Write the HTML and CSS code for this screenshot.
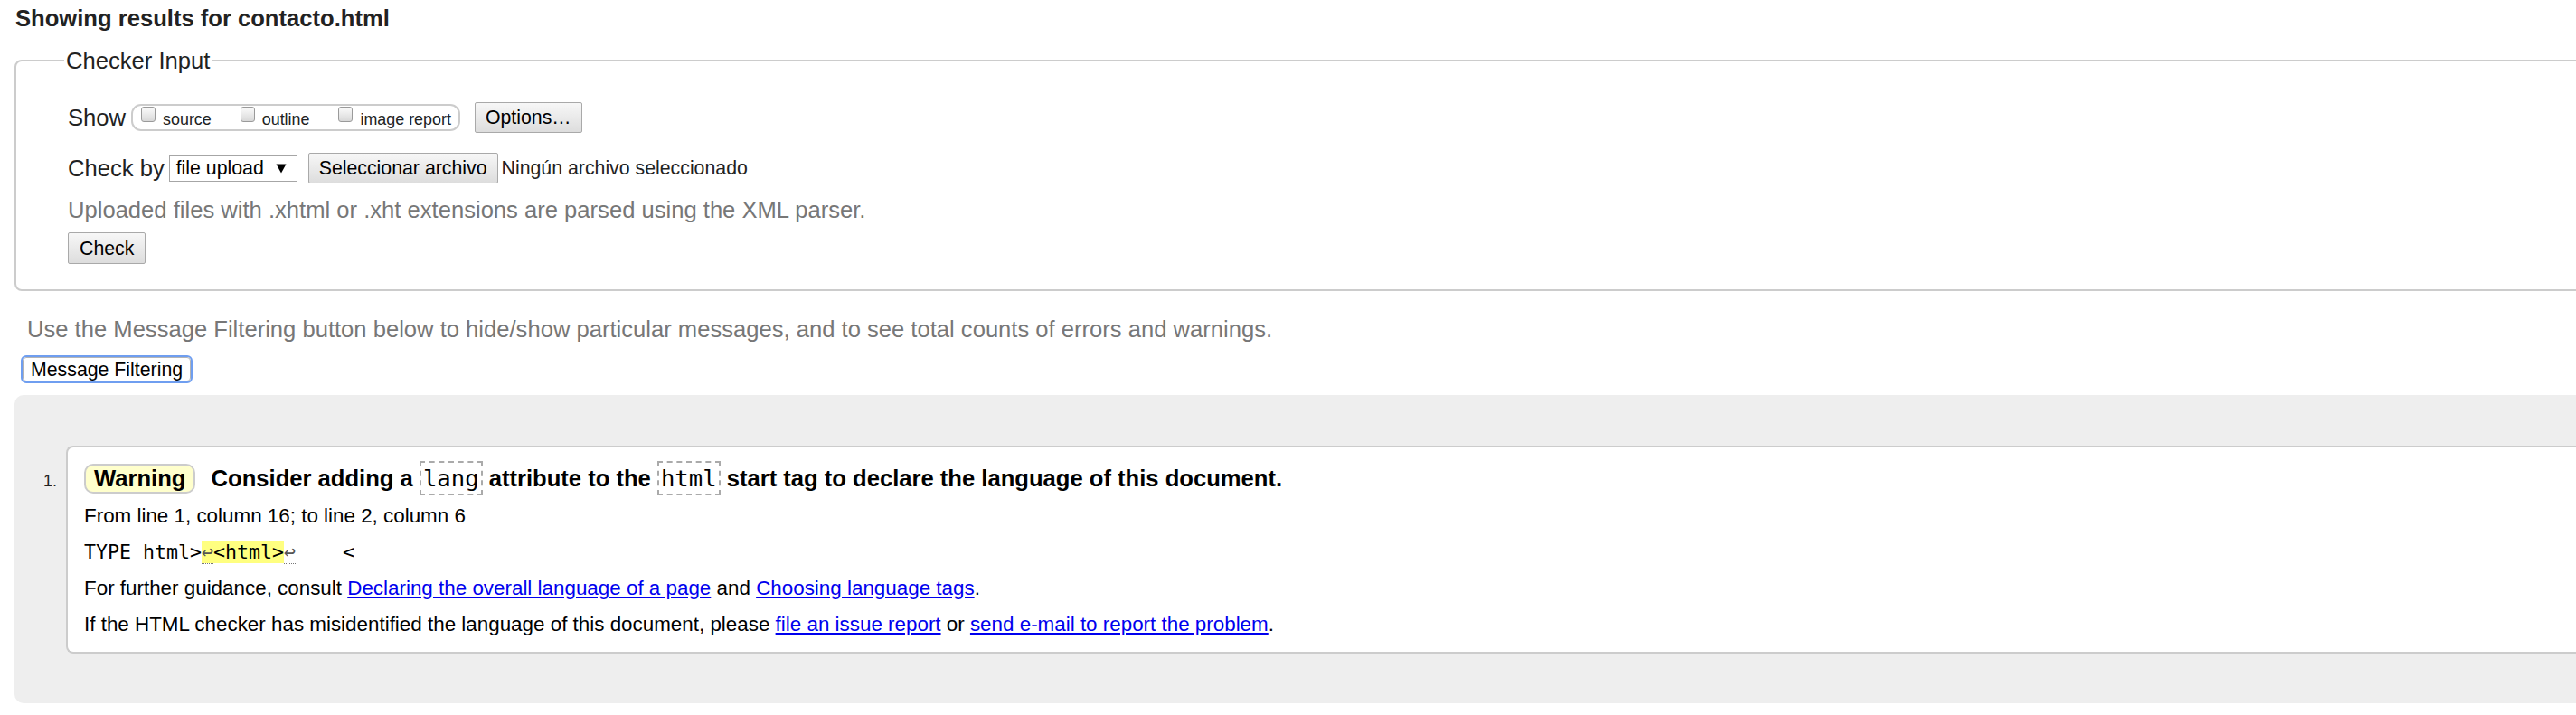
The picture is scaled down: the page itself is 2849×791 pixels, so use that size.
FILE: index.html
```html
<!DOCTYPE html>
<html>
<head>
<meta charset="utf-8">
<title>Showing results for contacto.html</title>
<link rel="stylesheet" href="styles.css">
</head>
<body>
<div class="page">
  <h2 class="title">Showing results for contacto.html</h2>

  <fieldset class="checker">
    <legend>Checker Input</legend>
    <div class="row show-row">
      <span class="lbl">Show</span>
      <span class="opts">
        <label class="opt"><span class="cb"></span>source</label>
        <label class="opt"><span class="cb"></span>outline</label>
        <label class="opt"><span class="cb"></span>image report</label>
      </span>
      <button class="btn options">Options…</button>
    </div>
    <div class="row by-row">
      <span class="lbl">Check by</span>
      <span class="select">file upload<svg class="caret" width="12" height="12" viewBox="0 0 12 12"><path d="M0.5 1.5 L11.5 1.5 L6 11.5 Z" fill="#000"/></svg></span>
      <button class="btn file">Seleccionar archivo</button>
      <span class="nofile">Ningún archivo seleccionado</span>
    </div>
    <p class="hint">Uploaded files with .xhtml or .xht extensions are parsed using the XML parser.</p>
    <button class="btn check">Check</button>
  </fieldset>

  <p class="filter-hint">Use the Message Filtering button below to hide/show particular messages, and to see total counts of errors and warnings.</p>
  <button class="filter-btn">Message Filtering</button>

  <div class="results">
    <ol class="messages">
      <li class="msg">
        <span class="num">1.</span>
        <div class="card">
          <p class="head"><strong class="badge">Warning</strong> <span>Consider adding a <code>lang</code> attribute to the <code>html</code> start tag to declare the language of this document.</span></p>
          <p class="detail">From line 1, column 16; to line 2, column 6</p>
          <p class="detail extract">TYPE html&gt;<mark><span class="lf">↩</span>&lt;html&gt;</mark><span class="lf">↩</span>    &lt;</p>
          <p class="detail">For further guidance, consult <a href="#">Declaring the overall language of a page</a> and <a href="#">Choosing language tags</a>.</p>
          <p class="detail">If the HTML checker has misidentified the language of this document, please <a href="#">file an issue report</a> or <a href="#">send e-mail to report the problem</a>.</p>
        </div>
      </li>
    </ol>
  </div>
</div>
</body>
</html>
```
FILE: styles.css
```css
html, body {
  margin: 0;
  padding: 0;
  overflow: hidden;
  background: #fff;
}

body {
  font-family: "Liberation Sans", Arial, sans-serif;
  font-size: 25.6px;
  color: #222;
}

.page {
  width: 2940px;
  padding: 5px 0 0 16px;
}

.title {
  margin: 0 0 0 1px;
  font-size: 25.6px;
  font-weight: bold;
  line-height: 30px;
  color: #222;
}

/* Checker input fieldset */
.checker {
  margin: 17px 0 0 0;
  border: 2px solid #ccc;
  border-radius: 8px;
  padding: 31px 0 28px 57px;
  min-width: 0;
}

.checker legend {
  font-size: 25.6px;
  line-height: 30px;
  padding: 0 2px;
  margin-left: -4px;
}

.row {
  display: flex;
  align-items: center;
}

.show-row {
  height: 34px;
}

.lbl {
  font-size: 25.6px;
  line-height: 30px;
}

.show-row .lbl {
  margin-right: 6px;
}

.opts {
  display: inline-flex;
  align-items: baseline;
  box-sizing: border-box;
  height: 30px;
  border: 2px solid #ccc;
  border-radius: 11px;
  padding: 1px 8px 0 9px;
  font-size: 17.9px;
  line-height: 25px;
}

.opt {
  display: inline-block;
  margin-right: 32px;
}

.opt:last-child {
  margin-right: 0;
}

.cb {
  display: inline-block;
  box-sizing: border-box;
  width: 16px;
  height: 17px;
  margin-right: 8px;
  border: 1px solid #9a9a9a;
  border-radius: 3px;
  background: linear-gradient(#fbfbfb, #d8d8d8);
  vertical-align: 3px;
}

.btn {
  font-family: "Liberation Sans", Arial, sans-serif;
  font-size: 21.3px;
  line-height: 24px;
  color: #000;
  background: linear-gradient(#f7f7f7, #dddddd);
  border: 1px solid #a9a9a9;
  border-radius: 2px;
  box-sizing: border-box;
  margin: 0;
}

.options {
  margin-left: 16px;
  height: 34px;
  padding: 0 11px;
}

.by-row {
  height: 34px;
  margin-top: 22px;
}

.by-row .lbl {
  margin-right: 5px;
}

.select {
  display: inline-flex;
  align-items: center;
  box-sizing: border-box;
  height: 29px;
  width: 142px;
  padding: 0 0 0 7px;
  border: 1px solid #a6a6a6;
  background: #fff;
  font-size: 21.3px;
  color: #000;
}

.caret {
  margin-left: 13px;
}

.file {
  margin-left: 12px;
  height: 34px;
  padding: 0 11px;
}

.nofile {
  margin-left: 4px;
  font-size: 21.3px;
  color: #222;
}

.hint {
  margin: 14px 0 0;
  line-height: 30px;
  color: #777;
}

.check {
  display: block;
  margin-top: 10px;
  height: 35px;
  padding: 0 12px;
}

/* Filter hint and button */
.filter-hint {
  margin: 27px 0 0 14px;
  line-height: 30px;
  color: #777;
}

.filter-btn {
  display: block;
  box-sizing: border-box;
  height: 27px;
  margin: 16px 0 0 9px;
  padding: 0 8px;
  font-family: "Liberation Sans", Arial, sans-serif;
  font-size: 21.3px;
  line-height: 24px;
  color: #000;
  background: #fff;
  border: 1px solid #b4b4b4;
  border-radius: 4px;
  outline: 2px solid #6f9ef0;
  outline-offset: 0;
}

/* Results */
.results {
  margin-top: 15px;
  background: #eee;
  border-radius: 10px 0 0 10px;
  padding: 56px 0 55px 0;
}

.messages {
  list-style: none;
  margin: 0;
  padding: 0;
}

.msg {
  display: flex;
  align-items: baseline;
}

.num {
  flex: none;
  width: 47px;
  padding-right: 10px;
  text-align: right;
  font-size: 17.9px;
  color: #222;
}

.card {
  flex: 1;
  background: #fff;
  border: 2px solid #ccc;
  border-right: none;
  border-radius: 8px 0 0 8px;
  padding: 17px 0 17px 18px;
}

.head {
  margin: 0;
  font-size: 25.6px;
  font-weight: bold;
  line-height: 34px;
  color: #000;
}

.badge {
  display: inline-block;
  background: #ffffcc;
  border: 2px solid #ccc;
  border-radius: 10px;
  padding: 0 9px;
  line-height: 29px;
  margin-right: 10px;
}

.head code {
  font-family: "DejaVu Sans Mono", "Liberation Mono", monospace;
  font-weight: normal;
  font-size: 25.6px;
  border: 2px dashed #aaa;
  padding: 2px 2px;
}

.detail {
  margin: 12px 0 0;
  font-size: 22.4px;
  line-height: 26px;
  color: #000;
}

.detail + .detail {
  margin-top: 14px;
}

.extract {
  font-family: "DejaVu Sans Mono", "Liberation Mono", monospace;
  font-size: 21.6px;
  white-space: pre;
}

.extract mark {
  background: #ffff80;
  color: #000;
}

.lf {
  color: #555;
  border-bottom: 1px dotted #777;
}

.detail a {
  color: #0000ee;
  text-decoration: underline;
}
```
